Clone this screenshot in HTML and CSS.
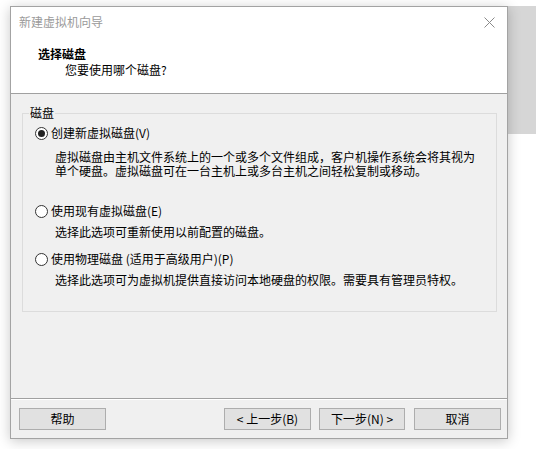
FILE: index.html
```html
<!DOCTYPE html>
<html lang="zh-CN">
<head>
<meta charset="utf-8">
<title>新建虚拟机向导</title>
<link rel="stylesheet" href="styles.css">
</head>
<body>
<div class="backwin"></div>
<div class="window">
  <div class="header">
    <div class="titlebar">
      <span class="title">新建虚拟机向导</span>
      <svg class="close" width="11" height="11" viewBox="0 0 11 11"><path d="M0.5 0.5 L10.5 10.5 M10.5 0.5 L0.5 10.5" stroke="#8a8a8a" stroke-width="1" fill="none"/></svg>
    </div>
    <div class="heading">选择磁盘</div>
    <div class="subheading">您要使用哪个磁盘?</div>
  </div>
  <div class="body">
    <fieldset class="group">
      <legend class="legend">磁盘</legend>
      <div class="option first"><span class="radio checked"></span><span>创建新虚拟磁盘(V)</span></div>
      <div class="desc d1">虚拟磁盘由主机文件系统上的一个或多个文件组成，客户机操作系统会将其视为<br>单个硬盘。虚拟磁盘可在一台主机上或多台主机之间轻松复制或移动。</div>
      <div class="option second"><span class="radio"></span><span>使用现有虚拟磁盘(E)</span></div>
      <div class="desc">选择此选项可重新使用以前配置的磁盘。</div>
      <div class="option third"><span class="radio"></span><span>使用物理磁盘 (适用于高级用户)(P)</span></div>
      <div class="desc">选择此选项可为虚拟机提供直接访问本地硬盘的权限。需要具有管理员特权。</div>
    </fieldset>
  </div>
  <div class="footer">
    <button class="btn help">帮助</button>
    <div class="spacer"></div>
    <button class="btn">&lt; 上一步(B)</button>
    <button class="btn next">下一步(N) &gt;</button>
    <button class="btn cancel">取消</button>
  </div>
</div>
</body>
</html>
```
FILE: styles.css
```css
html, body {
  margin: 0;
  padding: 0;
  background: #ffffff;
  width: 536px;
  height: 449px;
  overflow: hidden;
  font-family: "Noto Sans CJK SC", "Microsoft YaHei", sans-serif;
  font-size: 12px;
  color: #000;
}
.backwin {
  position: absolute;
  left: 490px;
  top: 6px;
  width: 46px;
  height: 128px;
  background: #d6d6d6;
}
.window {
  position: absolute;
  left: 10px;
  top: 6px;
  width: 498px;
  height: 433px;
  box-sizing: border-box;
  border: 1px solid #a3a3a3;
  background: #f0f0f0;
  box-shadow: 0 2px 12px rgba(0,0,0,0.22);
  display: flex;
  flex-direction: column;
}
.header {
  background: #ffffff;
  height: 86px;
  border-bottom: 1px solid #a0a0a0;
  flex: none;
}
.titlebar {
  height: 30px;
  display: flex;
  align-items: center;
  justify-content: space-between;
  padding: 0 12px 0 8px;
}
.title {
  color: #9a9a9a;
  line-height: 16px;
}
.close { display: block; }
.heading {
  font-weight: bold;
  margin-top: 8px;
  margin-left: 27px;
  line-height: 17px;
}
.subheading {
  margin-left: 54px;
  line-height: 16px;
}
.body {
  flex: 1;
  padding: 11px 10px 0 11px;
  border-bottom: 1px solid #a0a0a0;
  box-shadow: 0 1px 0 #ffffff;
}
.group {
  margin: 0;
  padding: 0 0 24px 12px;
  border: 1px solid #dcdcdc;
  min-width: 0;
}
.legend {
  margin-left: -6px;
  padding: 0 1px;
  line-height: 16px;
}
.option {
  display: flex;
  align-items: center;
  line-height: 16px;
  height: 16px;
  gap: 3px;
}
.option.first { margin-top: 4px; }
.option.second { margin-top: 25px; }
.option.third { margin-top: 12px; }
.radio {
  width: 11px;
  height: 11px;
  border: 1px solid #333;
  border-radius: 50%;
  background: #fff;
  position: relative;
  flex: none;
}
.radio.checked::after {
  content: "";
  position: absolute;
  left: 2px;
  top: 2px;
  width: 7px;
  height: 7px;
  border-radius: 50%;
  background: #222;
}
.desc {
  margin-left: 20px;
  margin-top: 6px;
  line-height: 14px;
  white-space: nowrap;
}
.desc.d1 { margin-top: 9px; }
.footer {
  height: 39px;
  flex: none;
  display: flex;
  align-items: flex-start;
  padding: 9px 6px 0 8px;
  box-sizing: border-box;
}
.spacer { flex: 1; }
.btn {
  width: 87px;
  height: 22px;
  box-sizing: border-box;
  border: 1px solid #adadad;
  background: #e1e1e1;
  font-family: "Noto Sans CJK SC", sans-serif;
  font-size: 12px;
  color: #000;
  padding: 0;
  line-height: 18px;
}
.btn.next { margin-left: 8px; width: 86px; }
.btn.cancel { margin-left: 9px; }
```
